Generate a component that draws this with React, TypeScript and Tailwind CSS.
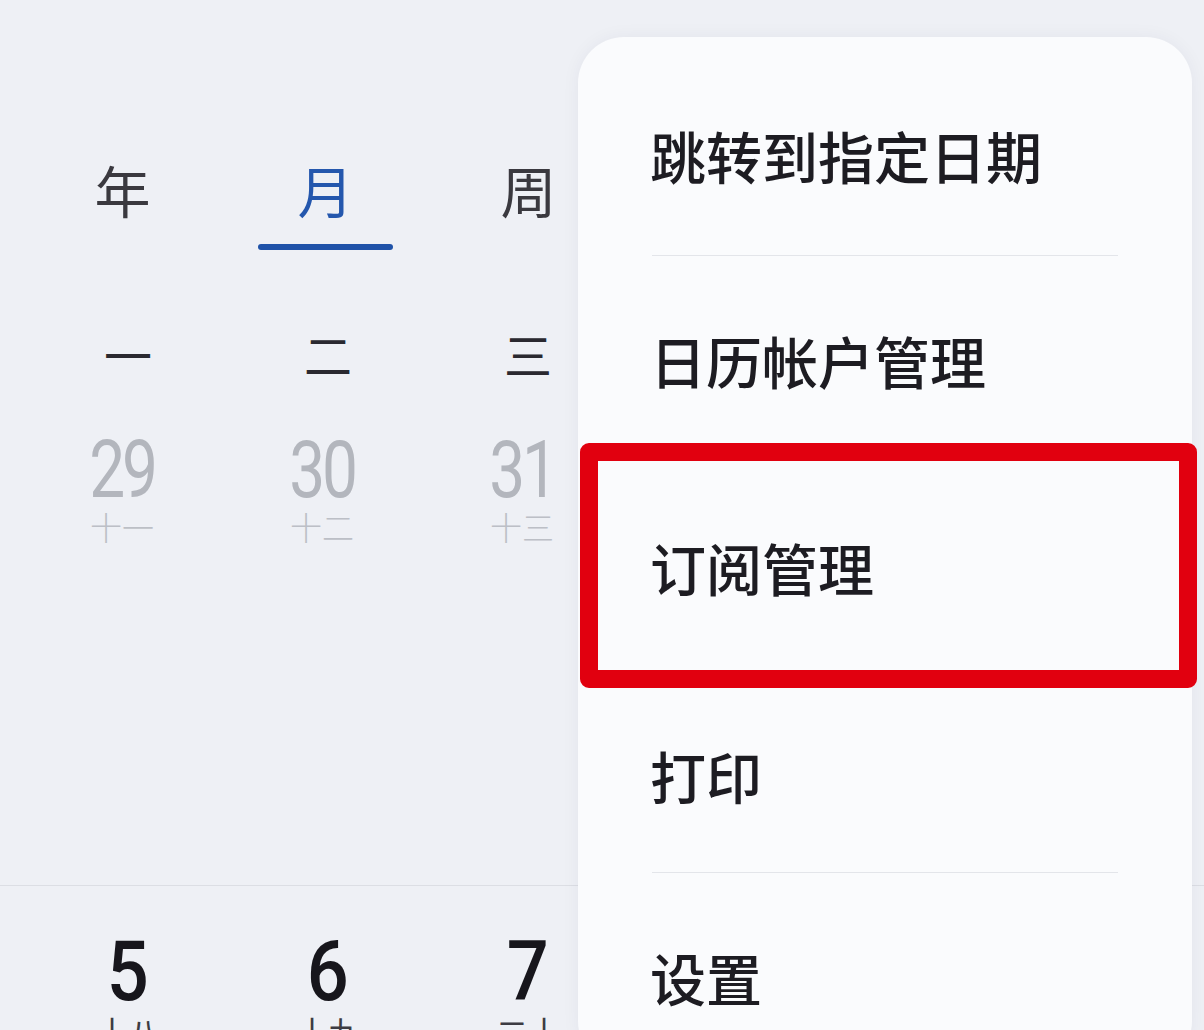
import React from "react";

const CJK = "font-['Noto_Sans_CJK_SC','Noto_Sans',sans-serif]";
const NUM = "font-['Roboto','Noto_Sans_CJK_SC',sans-serif]";

const tabs = ["年", "月", "周", "日"];
const weekdays = ["一", "二", "三", "四", "五", "六", "日"];
const week1 = [
  { d: "29", l: "十一" },
  { d: "30", l: "十二" },
  { d: "31", l: "十三" },
  { d: "1", l: "十四" },
  { d: "2", l: "十五" },
  { d: "3", l: "十六" },
  { d: "4", l: "十七" },
];
const week2 = [
  { d: "5", l: "十八" },
  { d: "6", l: "十九" },
  { d: "7", l: "二十" },
  { d: "8", l: "廿一" },
  { d: "9", l: "廿二" },
  { d: "10", l: "廿三" },
  { d: "11", l: "廿四" },
];

function MenuItem({ label, extra = "" }: { label: string; extra?: string }) {
  return (
    <div className={`flex items-center pl-[72px] ${extra}`}>
      <span className={`${CJK} text-[56px] leading-[56px] font-medium text-[#1d1c22]`}>{label}</span>
    </div>
  );
}

export default function App() {
  return (
    <div className="relative w-[1204px] h-[1030px] overflow-hidden bg-[#eef0f5]">
      {/* calendar */}
      <div className="flex flex-col">
        {/* tabs */}
        <div className="pt-[161px] pl-[21px] grid grid-cols-[repeat(4,203px)]">
          {tabs.map((t, i) => (
            <div key={t} className="flex flex-col items-center">
              <span
                className={`${CJK} text-[56px] leading-[56px] ${
                  i === 1 ? "text-[#2457ad]" : "text-[#3a393f]"
                }`}
              >
                {t}
              </span>
              <div
                className={`mt-[27px] h-[6px] w-[135px] rounded-full ${
                  i === 1 ? "bg-[#1f52a8]" : "bg-transparent"
                }`}
              />
            </div>
          ))}
        </div>

        {/* weekdays */}
        <div className="mt-[79px] pl-[28px] grid grid-cols-[repeat(7,200px)]">
          {weekdays.map((w, i) => (
            <div key={i} className="flex justify-center">
              <span className={`${CJK} text-[48px] leading-[48px] text-[#2a2930]`}>{w}</span>
            </div>
          ))}
        </div>

        {/* week 1 */}
        <div className="mt-[54px] h-[454px] pl-[22px] grid grid-cols-[repeat(7,200px)] content-start">
          {week1.map((c, i) => (
            <div key={i} className="flex flex-col items-center">
              <span
                className={`${NUM} text-[80px] leading-[78px] font-normal tracking-[-4px] scale-x-[0.8] ${
                  i < 3 ? "text-[#b3b6bd]" : "text-[#1a191f]"
                }`}
              >
                {c.d}
              </span>
              <span
                className={`${CJK} text-[32px] leading-[34px] font-light ${
                  i < 3 ? "text-[#bcbfc6]" : "text-[#55545a]"
                }`}
              >
                {c.l}
              </span>
            </div>
          ))}
        </div>

        <div className="h-px bg-[#dcdee4]" />

        {/* week 2 */}
        <div className="pt-[44px] pl-[28px] grid grid-cols-[repeat(7,200px)]">
          {week2.map((c, i) => (
            <div key={i} className="flex flex-col items-center">
              <span
                className={`${NUM} text-[84px] leading-[84px] font-medium scale-x-[0.88] text-[#17161c]`}
              >
                {c.d}
              </span>
              <span className={`${CJK} text-[32px] leading-[34px] text-[#3d3c42]`}>{c.l}</span>
            </div>
          ))}
        </div>
      </div>

      {/* popup menu */}
      <div className="absolute left-[578px] top-[37px] w-[614px] h-[1030px] rounded-[46px] bg-[#fafbfd] shadow-[0_0_18px_rgba(30,40,70,0.05)]">
        <div className="flex flex-col">
          <MenuItem label="跳转到指定日期" extra="h-[218px] pt-[18px]" />
          <div className="mx-[74px] h-px bg-[#e3e5ea]" />
          <MenuItem label="日历帐户管理" extra="h-[207px]" />
          <MenuItem label="订阅管理" extra="h-[207px]" />
          <MenuItem label="打印" extra="h-[202px] pt-[8px]" />
          <div className="mx-[74px] h-px bg-[#e3e5ea]" />
          <MenuItem label="设置" extra="h-[208px]" />
        </div>

        {/* highlight annotation */}
        <div className="absolute left-[2px] top-[406px] w-[617px] h-[245px] rounded-[9px] border-[18px] border-[#e1000f]" />
      </div>
    </div>
  );
}
